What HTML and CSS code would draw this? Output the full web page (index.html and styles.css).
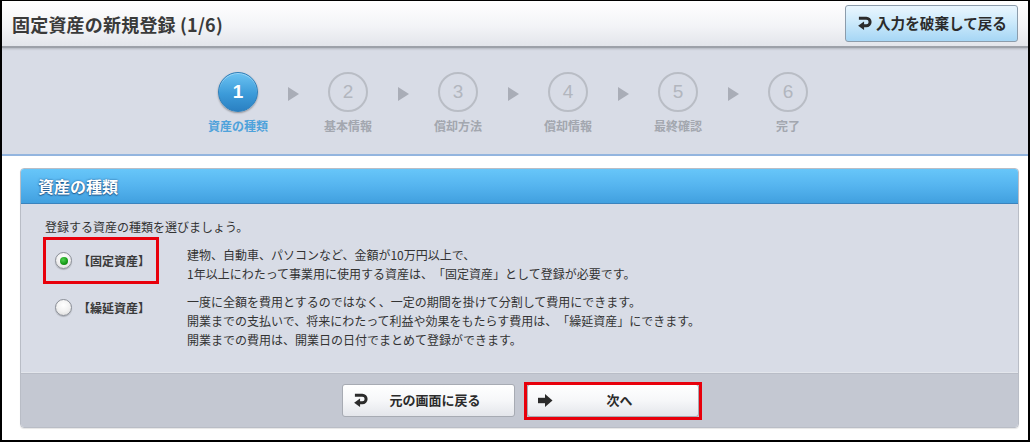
FILE: index.html
```html
<!DOCTYPE html>
<html lang="ja">
<head>
<meta charset="utf-8">
<title>固定資産の新規登録</title>
<link rel="stylesheet" href="styles.css">
</head>
<body>
<div class="frame">
  <header class="topbar">
    <h1 class="title">固定資産の新規登録 (1/6)</h1>
    <button class="discard-btn" type="button">
      <svg class="ico-return" viewBox="0 0 16 15" width="15" height="14" aria-hidden="true">
        <path d="M2 2.5 H10 A4 4 0 0 1 10 10.5 H6.5" fill="none" stroke="#2b2b2b" stroke-width="3.2"/>
        <polygon points="7.5,6 1.2,10.5 7.5,15" fill="#2b2b2b"/>
      </svg>
      <span>入力を破棄して戻る</span>
    </button>
  </header>

  <nav class="stepper">
    <div class="step active"><div class="circle">1</div><div class="step-label">資産の種類</div></div>
    <div class="arrow"></div>
    <div class="step"><div class="circle">2</div><div class="step-label">基本情報</div></div>
    <div class="arrow"></div>
    <div class="step"><div class="circle">3</div><div class="step-label">償却方法</div></div>
    <div class="arrow"></div>
    <div class="step"><div class="circle">4</div><div class="step-label">償却情報</div></div>
    <div class="arrow"></div>
    <div class="step"><div class="circle">5</div><div class="step-label">最終確認</div></div>
    <div class="arrow"></div>
    <div class="step"><div class="circle">6</div><div class="step-label">完了</div></div>
  </nav>

  <section class="panel">
    <div class="panel-head">資産の種類</div>
    <div class="panel-body">
      <p class="intro">登録する資産の種類を選びましょう。</p>
      <div class="option">
        <div class="opt-head">
          <span class="radio checked"></span>
          <span class="opt-label">【固定資産】</span>
          <span class="annot"></span>
        </div>
        <div class="opt-desc">
          <div>建物、自動車、パソコンなど、金額が10万円以上で、</div>
          <div>1年以上にわたって事業用に使用する資産は、「固定資産」として登録が必要です。</div>
        </div>
      </div>
      <div class="option">
        <div class="opt-head">
          <span class="radio"></span>
          <span class="opt-label">【繰延資産】</span>
        </div>
        <div class="opt-desc">
          <div>一度に全額を費用とするのではなく、一定の期間を掛けて分割して費用にできます。</div>
          <div>開業までの支払いで、将来にわたって利益や効果をもたらす費用は、「繰延資産」にできます。</div>
          <div>開業までの費用は、開業日の日付でまとめて登録ができます。</div>
        </div>
      </div>
    </div>
    <div class="panel-foot">
      <button class="foot-btn" type="button">
        <svg class="ico-return" viewBox="0 0 16 15" width="15" height="14" aria-hidden="true">
          <path d="M2 2.5 H10 A4 4 0 0 1 10 10.5 H6.5" fill="none" stroke="#2b2b2b" stroke-width="3.2"/>
          <polygon points="7.5,6 1.2,10.5 7.5,15" fill="#2b2b2b"/>
        </svg>
        <span class="btn-text">元の画面に戻る</span>
      </button>
      <button class="foot-btn next" type="button">
        <svg class="ico-next" viewBox="0 0 15 13" width="15" height="13" aria-hidden="true">
          <rect x="0" y="3.8" width="8" height="5.4" fill="#2b2b2b"/>
          <polygon points="7,0 14.5,6.5 7,13" fill="#2b2b2b"/>
        </svg>
        <span class="btn-text">次へ</span>
        <span class="annot"></span>
      </button>
    </div>
  </section>
</div>
</body>
</html>
```

FILE: styles.css
```css
* { box-sizing: border-box; }

html, body {
  margin: 0;
  padding: 0;
  background: #fff;
}

body {
  font-family: "Noto Sans CJK JP", "Noto Sans", sans-serif;
  color: #333;
  text-spacing-trim: space-all;
}

.frame {
  width: 1030px;
  height: 442px;
  border: 2px solid #000;
  border-top-width: 1px;
  background: #fff;
  overflow: hidden;
}

/* ---------- top bar ---------- */
.topbar {
  height: 47px;
  display: flex;
  align-items: center;
  justify-content: space-between;
  padding: 0 10px 0 10px;
  background: linear-gradient(#ffffff 0%, #f3f4f7 55%, #e3e5eb 100%);
  border-bottom: 2px solid #9da1a9;
  box-shadow: 0 1px 2px rgba(0,0,0,0.18);
  position: relative;
}

.title {
  margin: 0;
  font-size: 18px;
  font-weight: bold;
  line-height: 22px;
  color: #3a3a3a;
  letter-spacing: 0.2px;
}

.discard-btn {
  height: 37px;
  width: 173px;
  margin-top: -1px;
  display: flex;
  align-items: center;
  gap: 4px;
  padding: 0 0 0 11px;
  border: 1px solid #8c9cab;
  border-radius: 3px;
  background: linear-gradient(#eaf6fe 0%, #cdeafb 45%, #a6d6f5 100%);
  font-family: inherit;
  font-size: 14.6px;
  font-weight: bold;
  color: #2b2b2b;
  line-height: 20px;
}

/* ---------- stepper ---------- */
.stepper {
  height: 108px;
  display: flex;
  justify-content: center;
  align-items: flex-start;
  padding: 24px 4px 0 0;
  background: #d8dce6;
  border-bottom: 2px solid #93b5df;
}

.step {
  width: 70px;
  display: flex;
  flex-direction: column;
  align-items: center;
}

.circle {
  width: 40px;
  height: 40px;
  border-radius: 50%;
  border: 2px solid #b9bdc5;
  display: flex;
  align-items: center;
  justify-content: center;
  font-family: "Liberation Sans", Arial, sans-serif;
  font-size: 19px;
  color: #b2b6be;
}

.step.active .circle {
  border: 1px solid #2f7fb9;
  background: linear-gradient(#6cc3f2 0%, #3c9bd9 55%, #2a80c2 100%);
  color: #fff;
  font-weight: bold;
  box-shadow: 0 1px 2px rgba(0,0,0,0.35), inset 0 1px 0 rgba(255,255,255,0.35);
}

.step-label {
  margin-top: 5px;
  font-size: 12px;
  font-weight: bold;
  line-height: 18px;
  color: #a3a7af;
  white-space: nowrap;
}

.step.active .step-label { color: #4ea2db; }

.arrow {
  width: 40px;
  height: 40px;
  display: flex;
  align-items: center;
  justify-content: center;
}

.arrow::after {
  content: "";
  display: block;
  margin-top: 4px;
  width: 0;
  height: 0;
  border-top: 7px solid transparent;
  border-bottom: 7px solid transparent;
  border-left: 11px solid #a9adb7;
}

/* ---------- panel ---------- */
.panel {
  width: 999px;
  margin: 12px 0 0 18px;
  border-radius: 4px;
  border: 1px solid #b9bdc6;
  box-shadow: 0 1px 1px rgba(0,0,0,0.1);
}

.panel-head {
  height: 35px;
  padding-left: 17px;
  display: flex;
  align-items: center;
  background: linear-gradient(#67c6f9 0%, #55b4ef 50%, #41a0df 100%);
  border-bottom: 1px solid #3a83bd;
  border-radius: 3px 3px 0 0;
  color: #fff;
  font-size: 16px;
  font-weight: bold;
  text-shadow: 0 0 2px rgba(20,60,110,0.8), 0 1px 1px rgba(20,60,110,0.6);
}

.panel-body {
  height: 168px;
  padding: 14px 0 0 24px;
  background: #d8dce6;
  font-size: 12px;
  line-height: 19px;
  color: #333;
}

.intro {
  margin: 0 0 9px 0;
  line-height: 18px;
}

.option {
  display: flex;
  margin-bottom: 9px;
}

.opt-head {
  width: 142px;
  flex: none;
  display: flex;
  align-items: center;
  padding: 6px 0 0 10px;
  height: 25px;
  position: relative;
}

.opt-label {
  margin-left: 6px;
  font-weight: bold;
  color: #3a3a3a;
  line-height: 19px;
}

.radio {
  width: 17px;
  height: 17px;
  flex: none;
  border-radius: 50%;
  border: 1px solid #8b8f97;
  background: radial-gradient(circle at 50% 35%, #ffffff 0%, #f2f2f2 50%, #d6d6d6 100%);
  box-shadow: 0 1px 1px rgba(0,0,0,0.2);
  position: relative;
}

.radio.checked::after {
  content: "";
  position: absolute;
  left: 3.5px;
  top: 3.5px;
  width: 8px;
  height: 8px;
  border-radius: 50%;
  background: radial-gradient(circle at 40% 35%, #4fd14f 0%, #169a16 60%, #0c6e0c 100%);
}

.opt-desc {
  color: #333;
}

/* annotation boxes (red highlight over content) */
.annot {
  position: absolute;
  pointer-events: none;
  border: 3px solid #e8000b;
}

.opt-head .annot {
  left: -2px;
  top: -8px;
  width: 116px;
  height: 47px;
}

/* ---------- footer ---------- */
.panel-foot {
  height: 55px;
  display: flex;
  justify-content: center;
  align-items: center;
  gap: 12px;
  padding-left: 2px;
  background: #c4c8d2;
  border-top: 1px solid #e3e6ec;
  border-radius: 0 0 3px 3px;
  box-shadow: inset 0 1px 0 #b9bdc7;
}

.foot-btn {
  width: 173px;
  height: 33px;
  display: flex;
  align-items: center;
  padding: 0 0 0 10px;
  border: 1px solid #a7abb3;
  border-radius: 3px;
  background: linear-gradient(#ffffff 0%, #f6f7f9 50%, #e4e6eb 100%);
  font-family: inherit;
  font-size: 13px;
  font-weight: bold;
  color: #2b2b2b;
  position: relative;
}

.btn-text {
  flex: 1;
  text-align: center;
  padding-right: 12px;
  line-height: 18px;
}

.foot-btn.next { width: 172px; }

.foot-btn .annot {
  left: -4px;
  top: -3px;
  right: -4px;
  bottom: -4px;
}
```
